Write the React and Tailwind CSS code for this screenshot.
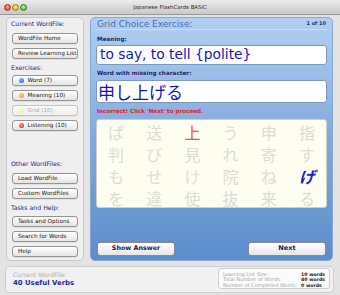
import React from "react";

const F = { fontFamily: '"DejaVu Sans", "Noto Sans CJK JP", sans-serif' };
const J = { fontFamily: '"Noto Sans CJK JP", "DejaVu Sans", sans-serif' };

function SideButton({ children, dot, disabled }) {
  return (
    <div
      className={
        "h-[11px] mx-[5px] rounded-[3px] border flex items-center pl-[5px] text-[5.7px] leading-none whitespace-nowrap shadow-[0_0.5px_0.5px_rgba(0,0,0,0.12)] " +
        (disabled
          ? "border-[#c4c4c4] bg-linear-to-b from-[#fafafa] to-[#eeeeee] text-[#a8a8a8]"
          : "border-[#959595] bg-linear-to-b from-white to-[#e4e4e4] text-[#1a1a1a]")
      }
    >
      {dot && (
        <span
          className="w-[4.5px] h-[4.5px] rounded-full mr-[4px] ml-[1px] shrink-0"
          style={{ background: dot }}
        />
      )}
      <span>{children}</span>
    </div>
  );
}

function Label({ children, className = "" }) {
  return (
    <div className={"h-[10px] leading-[10px] pl-[4px] text-[6.2px] text-[#26268a] whitespace-nowrap " + className}>
      {children}
    </div>
  );
}

const grid = [
  ["ぱ", "送", "上", "う", "申", "指"],
  ["判", "び", "見", "れ", "寄", "す"],
  ["も", "せ", "け", "院", "ね", "げ"],
  ["を", "違", "使", "抜", "来", "る"],
];

export default function App() {
  return (
    <div className="w-[340px] h-[295px] overflow-hidden bg-[#e3e3e3]" style={F}>
      {/* title bar */}
      <div className="h-[15px] flex items-center bg-linear-to-b from-[#ececec] to-[#c9c9c9] border-b border-[#9a9a9a]">
        <div className="flex items-center gap-[1px] pl-[4px] w-[40px]">
          <span className="w-[7px] h-[7px] rounded-full bg-[radial-gradient(circle_at_50%_35%,#ff9c8c,#d8392a)] border-[0.5px] border-[#a83020]" />
          <span className="w-[7px] h-[7px] rounded-full bg-[radial-gradient(circle_at_50%_35%,#ffe08a,#e0a018)] border-[0.5px] border-[#a87818]" />
          <span className="w-[7px] h-[7px] rounded-full bg-[radial-gradient(circle_at_50%_35%,#b8f090,#4aa82a)] border-[0.5px] border-[#3a7a20]" />
        </div>
        <div className="flex-1 text-center text-[5.4px] text-[#2a2a2a]">Japanese FlashCards BASIC</div>
        <div className="w-[40px]" />
      </div>

      {/* body */}
      <div className="flex mt-[2px] pl-[6px] gap-[6px]">
        {/* sidebar */}
        <div className="w-[78px] h-[244px] rounded-[5px] border border-[#cacaca] bg-[#efefef] flex flex-col pt-[1px]">
          <Label>Current WordFile:</Label>
          <div className="mt-[4px] flex flex-col gap-[4px]">
            <SideButton>WordFile Home</SideButton>
            <SideButton>Review Learning List</SideButton>
          </div>
          <Label className="mt-[4px]">Exercises:</Label>
          <div className="mt-[2px] flex flex-col gap-[4px]">
            <SideButton dot="radial-gradient(circle at 40% 35%, #8fb8ff, #1a50d8)">Word (7)</SideButton>
            <SideButton dot="radial-gradient(circle at 40% 35%, #ffd680, #e88a00)">Meaning (10)</SideButton>
            <SideButton disabled dot="radial-gradient(circle at 40% 35%, #fffde0, #ece88a)">Grid (10)</SideButton>
            <SideButton dot="radial-gradient(circle at 40% 35%, #ff9a9a, #e01010)">Listening (10)</SideButton>
          </div>
          <Label className="mt-[28px]">Other WordFiles:</Label>
          <div className="mt-[4px] flex flex-col gap-[4px]">
            <SideButton>Load WordFile</SideButton>
            <SideButton>Custom WordFiles</SideButton>
          </div>
          <Label className="mt-[4px]">Tasks and Help:</Label>
          <div className="mt-[3px] flex flex-col gap-[4px]">
            <SideButton>Tasks and Options</SideButton>
            <SideButton>Search for Words</SideButton>
            <SideButton>Help</SideButton>
          </div>
        </div>

        {/* main panel */}
        <div className="w-[243px] h-[244px] rounded-[5px] border border-[#86a8d6] bg-linear-to-b from-[#b2cff1] via-[#82a9dc] to-[#5b8dcb] px-[5px] flex flex-col">
          <div className="h-[12px] flex items-center justify-between border-b border-[#c6dbf4] pl-[1px] pr-[1px]">
            <span className="text-[9px] leading-[11px] text-[#4c6cb4] pt-[1px]">Grid Choice Exercise:</span>
            <span className="text-[5px] font-bold text-[#26306a]">1 of 10</span>
          </div>
          <div className="mt-[5px] h-[8px] leading-[8px] text-[5.7px] font-bold text-[#1c2868] pl-[1px]">Meaning:</div>
          <div className="mt-[2px] h-[20px] rounded-[3px] bg-white border border-[#7d98bf] flex items-center pl-[3px] text-[13.8px] text-[#1414c4] leading-none">
            to say, to tell {"{polite}"}
          </div>
          <div className="mt-[4px] h-[8px] leading-[8px] text-[5.7px] font-bold text-[#1c2868] pl-[1px]">Word with missing character:</div>
          <div className="mt-[3px] h-[23px] rounded-[3px] bg-white border border-[#7d98bf] flex items-center pl-[1px] text-[17px] text-[#1414c4] leading-none" style={J}>
            申し上げる
          </div>
          <div className="mt-[4px] h-[8px] leading-[8px] text-[5.6px] font-bold text-[#e02020] pl-[1px]">Incorrect! Click &apos;Next&apos; to proceed.</div>
          <div className="mt-[4px] h-[89px] rounded-[3px] bg-[#fdfdf0] border border-[#cfd0c0] grid grid-cols-6 content-start pt-[1px]" style={J}>
            {grid.map((row, r) =>
              row.map((ch, c) => {
                let cls = "text-[#dcdcd2]";
                if (r === 0 && c === 2) cls = "text-[#ff4f4f]";
                if (r === 2 && c === 5) cls = "text-[#1c1cc6] font-bold italic";
                return (
                  <div key={r + "-" + c} className={"h-[22px] flex items-center justify-center text-[16px] leading-none " + cls}>
                    {ch}
                  </div>
                );
              })
            )}
          </div>
          <div className="mt-[34px] flex justify-between px-[1px]">
            <div className="w-[78px] h-[14px] rounded-[3px] border border-[#8a8a8a] bg-linear-to-b from-white to-[#e6e6e6] flex items-center justify-center text-[6.4px] font-bold text-[#1c1c40]">
              Show Answer
            </div>
            <div className="w-[78px] h-[14px] rounded-[3px] border border-[#8a8a8a] bg-linear-to-b from-white to-[#e6e6e6] flex items-center justify-center text-[6.6px] font-bold text-[#1c1c40]">
              Next
            </div>
          </div>
        </div>
      </div>

      {/* bottom bar */}
      <div className="mt-[5px] ml-[5px] w-[329px] h-[27px] rounded-[4px] border border-[#d0d0d0] bg-[#f1f1f1] flex items-start justify-between">
        <div className="pl-[7px] pt-[3px] flex flex-col">
          <span className="text-[6.2px] leading-[9px] text-[#b0b0b0]">Current WordFile:</span>
          <span className="text-[6.9px] leading-[9px] font-bold text-[#1a2a9c]">40 Useful Verbs</span>
        </div>
        <div className="mt-[1px] mr-[3px] w-[112px] h-[21px] rounded-[3px] border border-[#cfcfcf] bg-[#fbfbfb] pl-[4px] pr-[3px] pt-[2.5px] flex justify-between">
          <div className="flex flex-col text-[5px] leading-[5.6px] text-[#a4a4a4] whitespace-nowrap">
            <span>Learning List Size:</span>
            <span>Total Number of Words:</span>
            <span>Number of Completed Words:</span>
          </div>
          <div className="flex flex-col text-[4.7px] leading-[5.6px] font-bold text-[#222] w-[25px] whitespace-nowrap">
            <span>10 words</span>
            <span>40 words</span>
            <span>0 words</span>
          </div>
        </div>
      </div>
    </div>
  );
}
